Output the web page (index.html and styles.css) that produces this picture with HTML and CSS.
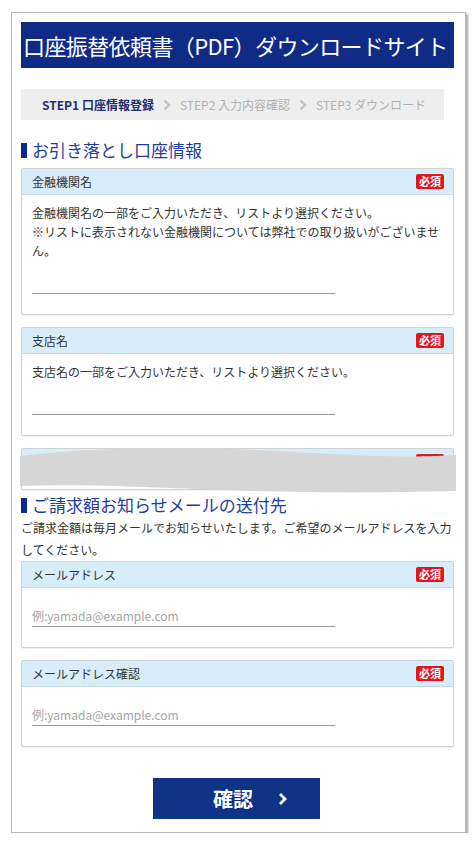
FILE: index.html
```html
<!DOCTYPE html>
<html lang="ja">
<head>
    <meta charset="UTF-8">
    <meta name="viewport" content="width=device-width, initial-scale=1.0">
    <title>口座振替依頼書（PDF）ダウンロードサイト</title>
    <link rel="stylesheet" href="styles.css">
</head>
<body>
    <div class="frame">
        <!-- Site title -->
        <h1 class="site-title">口座振替依頼書（PDF）ダウンロードサイト</h1>

        <!-- Steps -->
        <div class="steps">
            <span class="step active">STEP1 口座情報登録</span>
            <svg class="step-arrow" width="8" height="12" viewBox="0 0 8 12"><polyline points="1.5,1.5 6,6 1.5,10.5" fill="none" stroke="#c4c4c4" stroke-width="2.4"/></svg>
            <span class="step">STEP2 入力内容確認</span>
            <svg class="step-arrow" width="8" height="12" viewBox="0 0 8 12"><polyline points="1.5,1.5 6,6 1.5,10.5" fill="none" stroke="#c4c4c4" stroke-width="2.4"/></svg>
            <span class="step">STEP3 ダウンロード</span>
        </div>

        <!-- Account section -->
        <h2 class="sec-title first">お引き落とし口座情報</h2>

        <div class="card">
            <div class="card-head">金融機関名<span class="req">必須</span></div>
            <div class="card-body">
                <p class="note">金融機関名の一部をご入力いただき、リストより選択ください。<br>※リストに表示されない金融機関については弊社での取り扱いがございません。</p>
                <input type="text" class="field">
            </div>
        </div>

        <div class="card">
            <div class="card-head">支店名<span class="req">必須</span></div>
            <div class="card-body">
                <p class="note">支店名の一部をご入力いただき、リストより選択ください。</p>
                <input type="text" class="field">
            </div>
        </div>

        <!-- omitted part -->
        <div class="omitted">
            <div class="card cut">
                <div class="card-head">&nbsp;<span class="req">必須</span></div>
            </div>
            <svg class="wave" viewBox="0 0 436 48" preserveAspectRatio="none">
                <path d="M0,8 C50,2 110,-1 170,0 C240,1 300,6 360,8 C400,9 420,8 436,7 L436,43 C360,45 280,45 200,42 C120,39 60,36 0,38 Z" fill="#d6d6d6"/>
            </svg>
        </div>

        <!-- Mail section -->
        <h2 class="sec-title">ご請求額お知らせメールの送付先</h2>
        <p class="lead">ご請求金額は毎月メールでお知らせいたします。ご希望のメールアドレスを入力してください。</p>

        <div class="card">
            <div class="card-head">メールアドレス<span class="req">必須</span></div>
            <div class="card-body">
                <input type="email" class="field mail" placeholder="例:yamada@example.com">
            </div>
        </div>

        <div class="card">
            <div class="card-head">メールアドレス確認<span class="req">必須</span></div>
            <div class="card-body">
                <input type="email" class="field mail" placeholder="例:yamada@example.com">
            </div>
        </div>

        <button class="confirm-btn">確認
            <svg width="10" height="14" viewBox="0 0 10 14"><polyline points="2,2 7,7 2,12" fill="none" stroke="#fff" stroke-width="2.8"/></svg>
        </button>
    </div>
</body>
</html>
```

FILE: styles.css
```css
/* General */
body {
    margin: 0;
    font-family: "Noto Sans CJK JP", "Noto Sans", sans-serif;
    color: #333;
    background: #fff;
}

.frame {
    width: 433px;
    margin: 12px 0 0 11px;
    padding: 9px 11px 13px 9px;
    border: 1px solid #b9b9b9;
    box-shadow: 2px 2px 2px #a8a8a8;
}

/* Title */
.site-title {
    margin: 0;
    height: 46px;
    line-height: 46px;
    padding-left: 2px;
    background-color: #0f2b85;
    color: #fff;
    font-size: 22px;
    font-weight: normal;
    letter-spacing: -0.6px;
    white-space: nowrap;
    overflow: hidden;
}

/* Steps */
.steps {
    display: flex;
    align-items: center;
    gap: 9px;
    margin: 21px 10px 0 0;
    height: 31px;
    padding-left: 21px;
    background-color: #eeeeee;
}
.step {
    font-size: 12px;
    color: #b0b0b0;
    white-space: nowrap;
}
.step.active {
    color: #1c3070;
    font-weight: bold;
}

/* Section titles */
.sec-title {
    margin: 0;
    font-size: 17px;
    font-weight: normal;
    line-height: 24px;
    color: #1f3f9c;
    display: flex;
    align-items: center;
}
.sec-title::before {
    content: "";
    display: inline-block;
    width: 6px;
    height: 15px;
    margin-right: 5px;
    background-color: #0c2a8c;
}
.sec-title.first {
    margin-top: 18px;
    margin-bottom: 6px;
}

.lead {
    margin: 0;
    font-size: 12px;
    line-height: 22px;
}

/* Cards */
.card {
    border: 1px solid #cfd3d6;
    border-radius: 2px;
    box-shadow: 0 1px 1px rgba(0, 0, 0, 0.06);
    margin-bottom: 12px;
    background: #fff;
}
.card-head {
    display: flex;
    justify-content: space-between;
    align-items: center;
    height: 25px;
    padding: 0 10px;
    background-color: #d8edfa;
    border-bottom: 1px solid #c5d9e6;
    font-size: 12px;
    color: #333;
}
.req {
    font-size: 11px;
    line-height: 15px;
    padding: 0 3px;
    margin-right: -1px;
    background-color: #e5141b;
    color: #fff;
    font-weight: bold;
    border-radius: 2px;
}
.card-body {
    padding: 8px 10px 20px;
}
.note {
    margin: 0;
    font-size: 12px;
    line-height: 19px;
}
.field {
    display: block;
    box-sizing: border-box;
    width: 303px;
    height: 30px;
    margin-top: 4px;
    padding: 0;
    border: none;
    border-bottom: 1px solid #9a9a9a;
    background: transparent;
    font-family: inherit;
    font-size: 12px;
    outline: none;
}
.field.mail {
    height: 31px;
    margin-top: 0;
    padding: 10px 0 2px;
    line-height: 18px;
}
.field::placeholder {
    color: #a5a5a5;
}

/* Omitted block */
.omitted {
    position: relative;
    height: 45px;
}
.card.cut {
    height: 40px;
    overflow: hidden;
    margin: 0;
}
.wave {
    position: absolute;
    top: 0;
    left: -1px;
    width: 436px;
    height: 48px;
}

/* Button */
.confirm-btn {
    display: flex;
    align-items: center;
    gap: 25px;
    width: 167px;
    height: 41px;
    margin: 31px 0 0 132px;
    padding: 0 0 0 60px;
    border: none;
    background-color: #0f3386;
    color: #fff;
    font-family: inherit;
    font-size: 20px;
    font-weight: bold;
    cursor: pointer;
}
.confirm-btn:hover {
    background-color: #0b2a70;
}
```
